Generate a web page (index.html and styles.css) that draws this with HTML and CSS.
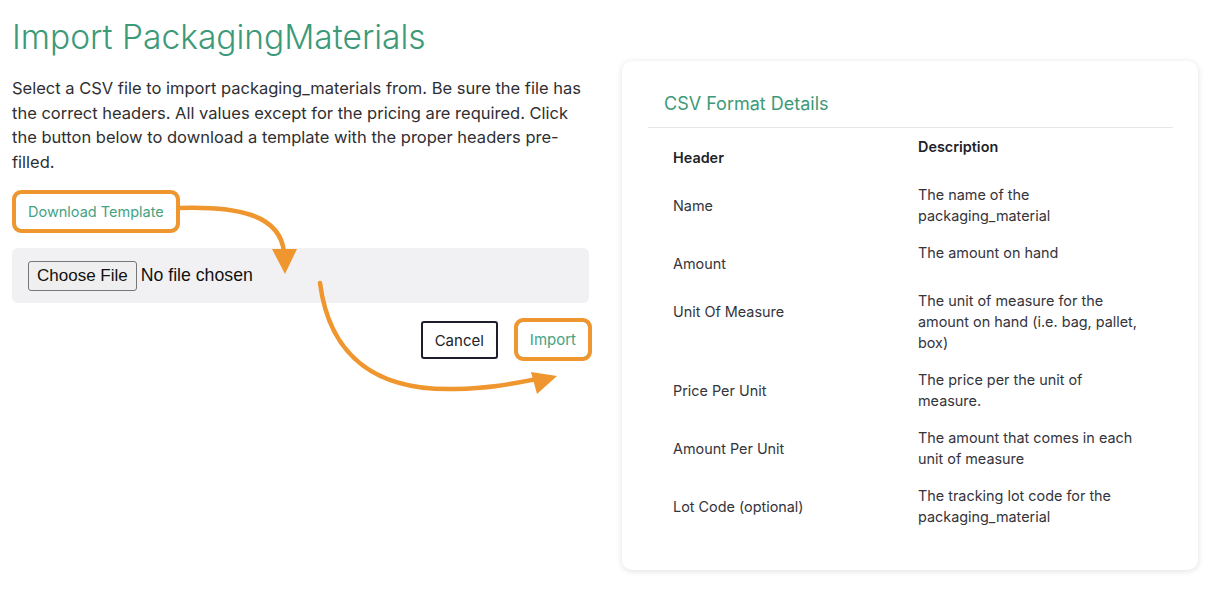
FILE: index.html
```html
<!DOCTYPE html>
<html lang="en">
<head>
<meta charset="utf-8">
<title>Import PackagingMaterials</title>
<link rel="stylesheet" href="styles.css">
</head>
<body>
<div class="page">
  <div class="left">
    <h1 class="title">Import PackagingMaterials</h1>
    <p class="intro">Select a CSV file to import packaging_materials from. Be sure the file has the correct headers. All values except for the pricing are required. Click the button below to download a template with the proper headers pre-filled.</p>
    <div class="dl-row"><button class="btn btn-green highlight">Download Template</button></div>
    <div class="file-box">
      <button class="file-btn">Choose File</button>
      <span class="file-name">No file chosen</span>
    </div>
    <div class="actions">
      <button class="btn btn-dark">Cancel</button>
      <button class="btn btn-green highlight">Import</button>
    </div>
  </div>
  <div class="card">
    <h2 class="card-title">CSV Format Details</h2>
    <table class="fmt">
      <tr><th class="hcol">Header</th><th class="dcol">Description</th></tr>
      <tr><td class="hcol">Name</td><td class="dcol">The name of the packaging_material</td></tr>
      <tr><td class="hcol">Amount</td><td class="dcol">The amount on hand</td></tr>
      <tr><td class="hcol">Unit Of Measure</td><td class="dcol">The unit of measure for the amount on hand (i.e. bag, pallet, box)</td></tr>
      <tr><td class="hcol">Price Per Unit</td><td class="dcol">The price per the unit of measure.</td></tr>
      <tr><td class="hcol">Amount Per Unit</td><td class="dcol">The amount that comes in each unit of measure</td></tr>
      <tr><td class="hcol">Lot Code (optional)</td><td class="dcol">The tracking lot code for the packaging_material</td></tr>
    </table>
  </div>
  <svg class="arrows" width="1222" height="604" viewBox="0 0 1222 604" aria-hidden="true">
    <path d="M178,208 C236,206 280,214 284,252" fill="none" stroke="#f0962e" stroke-width="4.5" stroke-linecap="round"/>
    <polygon points="272,249 297,249 285,274" fill="#f0962e"/>
    <path d="M320,283 C330,360 380,391 455,389 C495,388 515,383 537,379" fill="none" stroke="#f0962e" stroke-width="4.5" stroke-linecap="round"/>
    <polygon points="531,372 557,376 537,394" fill="#f0962e"/>
  </svg>
</div>
</body>
</html>
```

FILE: styles.css
```css
* { box-sizing: border-box; }
html, body { margin: 0; padding: 0; background: #ffffff; }
body { font-family: Inter, "Noto Sans", sans-serif; color: #2f2f33; }

.page {
  position: relative;
  width: 1222px;
  height: 604px;
  display: grid;
  grid-template-columns: 577px 576px;
  column-gap: 33px;
  align-items: start;
  padding: 0 12px;
}

.title {
  margin: 17px 0 0;
  font-size: 33.5px;
  font-weight: 300;
  line-height: 41px;
  color: #3d9a78;
  letter-spacing: 0;
}

.intro {
  margin: 18px 0 0;
  font-size: 16.5px;
  line-height: 24.5px;
  color: #2f2f33;
}

.dl-row { margin-top: 19px; display: flex; padding-left: 3px; }

.btn {
  font-family: Inter, "Noto Sans", sans-serif;
  background: #ffffff;
  border-radius: 4px;
  cursor: pointer;
}
.btn-green {
  border: 1px solid #46a283;
  color: #46a283;
  font-size: 14.5px;
  height: 37px;
  padding: 0 12px;
}
.btn-dark {
  border: 2px solid #1e1e2d;
  color: #222228;
  font-size: 15px;
  height: 38px;
  padding: 0 12px;
  border-radius: 3px;
}
.highlight {
  outline: 4px solid #f0962e;
  outline-offset: -1px;
  border-radius: 6px;
}

.file-box {
  margin-top: 18px;
  background: #f1f1f3;
  border-radius: 6px;
  height: 55px;
  padding: 0 16px;
  display: flex;
  align-items: center;
  gap: 4px;
}
.file-btn {
  font-family: "Liberation Sans", Arial, sans-serif;
  font-size: 17px;
  height: 30px;
  padding: 0 8px;
  background: #efefef;
  border: 1px solid #767676;
  border-radius: 3px;
  color: #111;
}
.file-name {
  font-family: "Liberation Sans", Arial, sans-serif;
  font-size: 17.7px;
  color: #111;
}

.actions {
  margin-top: 18px;
  display: flex;
  justify-content: flex-end;
  gap: 19px;
}
.actions .btn-green { font-size: 15px; }

.card {
  margin-top: 61px;
  background: #ffffff;
  border-radius: 10px;
  box-shadow: 0 1px 6px rgba(0, 0, 0, 0.13);
  padding: 29px 25px 35px 26px;
}
.card-title {
  margin: 0;
  padding: 0 16px 10px;
  font-size: 18px;
  font-weight: 400;
  line-height: 27px;
  color: #3d9a78;
  border-bottom: 1px solid #e6e7eb;
}

.fmt {
  width: 100%;
  border-collapse: collapse;
  table-layout: fixed;
  font-size: 14.4px;
  line-height: 21px;
  color: #34343c;
}
.fmt th, .fmt td {
  text-align: left;
  vertical-align: top;
  padding: 8px 25px;
}
.fmt th { font-weight: 600; color: #1f1f28; }
.fmt .hcol { width: 245px; padding-top: 19px; }
.fmt .dcol { width: 280px; padding-right: 29px; }

.arrows {
  position: absolute;
  left: 0;
  top: 0;
  pointer-events: none;
}
```
